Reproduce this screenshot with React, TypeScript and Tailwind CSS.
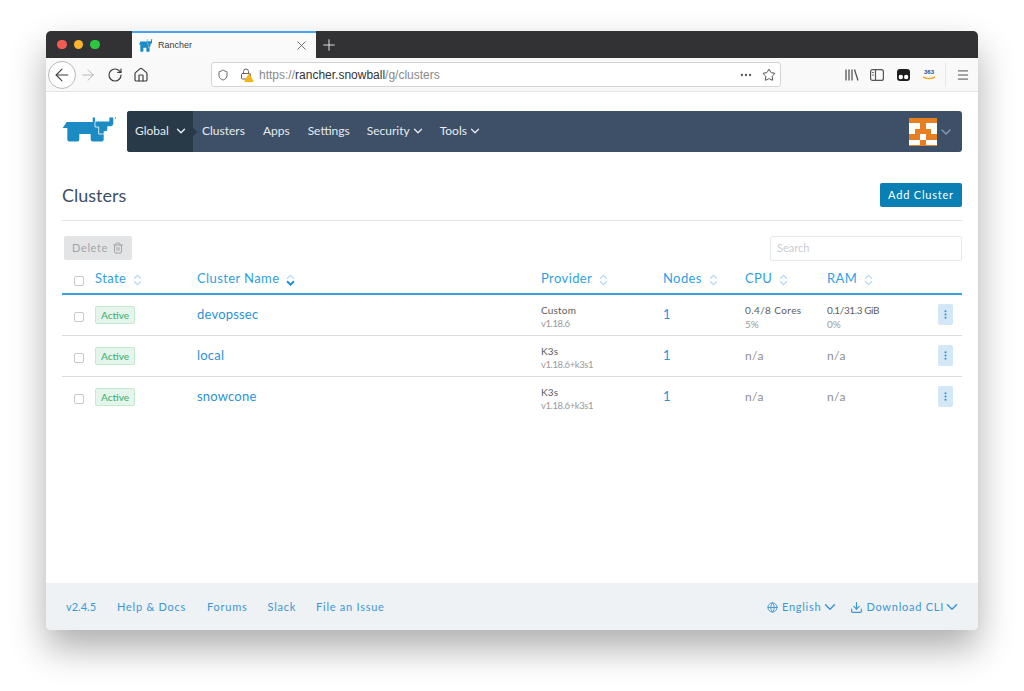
import { ArrowLeft, ArrowRight, ChevronDown, Download, EllipsisVertical, Globe, Home, Menu, MoreHorizontal, RotateCw, Star, Trash2, X, Plus, Shield, Lock } from "lucide-react"

const font = "font-['Lato','Open_Sans',sans-serif]"

function Rhino({ className }: { className?: string }) {
  return (
    <svg viewBox="0 0 55 25" preserveAspectRatio="none" className={className}>
      <path
        fill="#1a8cc3"
        d="M0.7 11 L4.7 5 H30.7 V0.5 H33 V4.5 H47.3 V0.5 H51.3 V6 Q51.3 9.3 48 9.3 H45.3 V12.5 Q45.3 14.3 43.5 14.3 H41.7 V22.5 Q41.7 24.5 39.7 24.5 H31 Q28.7 24.5 28.7 22.5 V17 H17.3 V22.5 Q17.3 24.5 15.3 24.5 H7.3 Q5.3 24.5 5.3 22.5 V11 Z"
      />
      <path fill="none" stroke="#fff" strokeWidth="0.8" d="M33 4.5 V10 H36.7 V17 H41.7" />
      <circle cx="53.5" cy="1" r="0.7" fill="#1a8cc3" />
    </svg>
  )
}

function Sort({ active }: { active?: boolean }) {
  return (
    <svg viewBox="0 0 10 14" className="ml-[7px] mt-[1px] h-[12px] w-[9px]" fill="none" stroke="#b5daf3" strokeWidth="1.4">
      <path d="M1 5.5 L5 1.5 L9 5.5" />
      <path d="M1 8.5 L5 12.5 L9 8.5" stroke={active ? "#1b8fd6" : "#b5daf3"} strokeWidth={active ? 2.2 : 1.4} />
    </svg>
  )
}

function Checkbox() {
  return <span className="block h-[10px] w-[10px] rounded-[2px] border border-[#c9c9c9] bg-white" />
}

const rows = [
  { name: "devopssec", provider: "Custom", version: "v1.18.6", cpu: "0.4/8 Cores", cpuPct: "5%", ram: "0.1/31.3 GiB", ramPct: "0%" },
  { name: "local", provider: "K3s", version: "v1.18.6+k3s1" },
  { name: "snowcone", provider: "K3s", version: "v1.18.6+k3s1" },
]

const grid = "grid grid-cols-[33px_102px_344px_122px_82px_82px_111px_24px]"

export default function App() {
  return (
    <div className={`h-[691px] w-[1024px] overflow-hidden bg-white pl-[46px] pt-[31px] ${font}`}>
      <div className="flex h-[599px] w-[932px] flex-col overflow-hidden rounded-[5px] bg-white shadow-[0_18px_36px_rgba(0,0,0,0.32)]">
        {/* Tab strip */}
        <div className="flex h-[27px] items-stretch bg-[#323234]">
          <div className="flex w-[86px] items-center gap-[7px] pl-[11px]">
            <span className="h-[9.5px] w-[9.5px] rounded-full bg-[#f25c54]" />
            <span className="h-[9.5px] w-[9.5px] rounded-full bg-[#f9b52c]" />
            <span className="h-[9.5px] w-[9.5px] rounded-full bg-[#2bc840]" />
          </div>
          <div className="flex w-[184px] items-center border-t-2 border-[#4aa3ea] bg-[#fafafa] pl-[7px] pr-[7px]">
            <Rhino className="h-[13px] w-[14px]" />
            <span className="ml-[5px] flex-1 font-['Liberation_Sans',sans-serif] text-[9px] text-[#3b3b3b]">Rancher</span>
            <X className="h-[15px] w-[15px] text-[#555]" strokeWidth={1.3} />
          </div>
          <div className="flex w-[26px] items-center justify-center">
            <Plus className="h-[18px] w-[18px] text-[#e5e5e5]" strokeWidth={1.3} />
          </div>
        </div>

        {/* Toolbar */}
        <div className="flex h-[34px] items-center border-b border-[#e4e4e4] bg-[#f9f9fa]">
          <span className="ml-[2px] flex h-[28px] w-[28px] items-center justify-center rounded-full border border-[#b9b9b9] bg-white">
            <ArrowLeft className="h-[20px] w-[20px] text-[#3f3f3f]" strokeWidth={1.3} />
          </span>
          <ArrowRight className="ml-[3px] h-[18px] w-[18px] text-[#b5b5b5]" strokeWidth={1.3} />
          <RotateCw className="ml-[10px] h-[16px] w-[16px] text-[#3f3f3f]" strokeWidth={1.8} />
          <Home className="ml-[10px] h-[16px] w-[16px] text-[#3f3f3f]" strokeWidth={1.8} />
          <div className="ml-[62px] flex h-[25px] w-[570px] items-center rounded-[3px] border border-[#d4d4d4] bg-white pl-[5px] pr-[4px]">
            <Shield className="h-[12px] w-[12px] text-[#555]" strokeWidth={1.8} />
            <span className="relative ml-[11px] h-[14px] w-[14px]">
              <Lock className="h-[12px] w-[12px] text-[#555]" strokeWidth={1.8} />
              <svg viewBox="0 0 10 9" className="absolute bottom-0 right-0 h-[9px] w-[10px]">
                <path d="M5 0 L10 9 H0 Z" fill="#f5b31c" />
              </svg>
            </span>
            <span className="ml-[5px] flex-1 font-['Liberation_Sans',sans-serif] text-[12px] text-[#8a8a8a]">
              https://<span className="text-[#333]">rancher.snowball</span>/g/clusters
            </span>
            <MoreHorizontal className="h-[14px] w-[14px] text-[#555]" />
            <Star className="ml-[9px] h-[14px] w-[14px] text-[#444]" strokeWidth={1.6} />
          </div>
          {/* Library, sidebar, extensions */}
          <svg viewBox="0 0 14 12" className="ml-[64px] h-[12px] w-[14px]" fill="none" stroke="#555" strokeWidth="1.3">
            <path d="M1 0.5 V11.5 M4 0.5 V11.5 M7 0.5 V11.5 M9.5 0.5 L13 11.5" />
          </svg>
          <svg viewBox="0 0 14 12" className="ml-[11px] h-[12px] w-[14px]" fill="none" stroke="#555" strokeWidth="1.2">
            <rect x="0.6" y="0.6" width="12.8" height="10.8" rx="2" />
            <path d="M5.5 0.6 V11.4 M2.2 3.5 H3.8 M2.2 6 H3.8" />
          </svg>
          <svg viewBox="0 0 13 12" className="ml-[13px] h-[12px] w-[13px]">
            <rect width="13" height="12" rx="3" fill="#1c1c1e" />
            <circle cx="3.8" cy="8" r="2.2" fill="#fff" />
            <circle cx="9.2" cy="8" r="2.2" fill="#fff" />
          </svg>
          <div className="ml-[12px] flex w-[14px] flex-col items-center">
            <span className="font-['Liberation_Sans',sans-serif] text-[6px] font-bold leading-[7px] text-[#2a4b8d]">363</span>
            <svg viewBox="0 0 14 4" className="h-[4px] w-[14px]" fill="none" stroke="#f5a623" strokeWidth="1.4">
              <path d="M1 0.8 Q7 4.5 13 0.8" />
            </svg>
          </div>
          <span className="ml-[9px] h-[24px] w-px bg-[#e6e6e6]" />
          <Menu className="ml-[10px] h-[14px] w-[14px] text-[#444]" strokeWidth={1.6} />
        </div>

        {/* Page */}
        <div className="flex flex-1 flex-col bg-white">
          <div className="flex-1 px-4 pt-[19px]">
            <div className="flex h-[41px] items-stretch">
              <div className="flex w-[65px] items-center pb-[4px]">
                <Rhino className="h-[25px] w-[55px]" />
              </div>
              <nav className="flex flex-1 items-center rounded-[3px] bg-[#3d5068] text-[12px] text-[#e6ebef]">
                <div className="relative flex h-full w-[66px] items-center rounded-l-[3px] bg-[#283947] pb-[2px] pl-[8px]">
                  Global
                  <ChevronDown className="ml-[5px] h-[14px] w-[14px]" strokeWidth={2.5} />
                  <span className="absolute -right-[3px] top-1/2 h-[6px] w-[6px] -translate-y-1/2 rotate-45 bg-[#283947]" />
                </div>
                <span className="ml-[9px] pb-[2px]">Clusters</span>
                <span className="ml-[18px] pb-[2px]">Apps</span>
                <span className="ml-[18px] pb-[2px]">Settings</span>
                <span className="ml-[17px] flex items-center pb-[2px]">Security<ChevronDown className="ml-[1px] h-[14px] w-[14px]" strokeWidth={2.2} /></span>
                <span className="ml-[15px] flex items-center pb-[2px]">Tools<ChevronDown className="ml-[1px] h-[14px] w-[14px]" strokeWidth={2.2} /></span>
                <div className="ml-auto mr-[8px] flex items-center">
                  <div className="grid h-[28px] w-[28px] grid-cols-5 grid-rows-5 bg-[#e67e22]">
                    {[0,0,0,0,0, 1,1,0,1,1, 1,0,0,0,1, 0,0,1,0,0, 1,1,0,1,1].map((w, i) => (
                      <span key={i} className={w ? "bg-white" : ""} />
                    ))}
                  </div>
                  <ChevronDown className="ml-px h-[16px] w-[16px] text-[#8d9bab]" strokeWidth={2} />
                </div>
              </nav>
            </div>

            <div className="flex h-[69px] items-center justify-between border-b border-[#e6e6e6] pt-[24px] pb-[6px]">
              <h1 className="text-[18px] text-[#3d5068]">Clusters</h1>
              <button className="h-[24px] w-[82px] rounded-[2px] bg-[#0a7fb3] pt-px text-[11px] tracking-[0.8px] text-white">Add Cluster</button>
            </div>

            <div className="mt-[15px] flex items-start justify-between">
              <button className="ml-[2px] flex h-[24px] w-[68px] items-center justify-center gap-[4px] rounded-[2px] bg-[#e3e4e6] text-[11px] tracking-[0.6px] text-[#a3a5a8]">
                Delete <Trash2 className="h-[12px] w-[12px]" />
              </button>
              <div className="flex h-[25px] w-[192px] items-center rounded-[2px] border border-[#e6e9eb] pl-[6px] text-[11px] text-[#c9cdd1]">Search</div>
            </div>

            <div className={`${grid} mt-[7px] h-[27px] items-center border-b-2 border-[#3a9fdf] pb-[3px] text-[13px] tracking-[0.4px] text-[#2f9fe3]`}>
              <span className="pl-[12px] pt-[3px]"><Checkbox /></span>
              <span className="flex items-center">State<Sort /></span>
              <span className="flex items-center">Cluster Name<Sort active /></span>
              <span className="flex items-center">Provider<Sort /></span>
              <span className="flex items-center">Nodes<Sort /></span>
              <span className="flex items-center">CPU<Sort /></span>
              <span className="flex items-center">RAM<Sort /></span>
              <span />
            </div>

            {rows.map((r, i) => (
              <div key={r.name} className={`${grid} h-[41px] items-center border-b ${i < 2 ? "border-[#dcdcdc]" : "border-transparent"}`}>
                <span className="pl-[12px] pt-[3px]"><Checkbox /></span>
                <span className="flex">
                  <span className="h-[18px] w-[40px] rounded-[2px] border border-[#c4e8d2] bg-[#e5f5eb] text-center text-[10px] leading-[16px] font-medium text-[#3bb371]">Active</span>
                </span>
                <span className="text-[13px] tracking-[0.2px] text-[#2a93d8]">{r.name}</span>
                <span className="pt-[4px] text-[10px] leading-[14px]">
                  <span className="block tracking-[0.2px] text-[#5c5c5c]">{r.provider}</span>
                  <span className="block text-[9.5px] tracking-[-0.4px] text-[#9a9a9a]">{r.version}</span>
                </span>
                <span className="text-[13px] text-[#2a93d8]">1</span>
                {r.cpu ? (
                  <span className="pt-[4px] text-[10px] leading-[14px]">
                    <span className="block tracking-[0.4px] text-[#5c5c5c]">{r.cpu}</span>
                    <span className="block text-[#9a9a9a]">{r.cpuPct}</span>
                  </span>
                ) : (
                  <span className="text-[12px] tracking-[0.4px] text-[#8f8f8f]">n/a</span>
                )}
                {r.ram ? (
                  <span className="pt-[4px] text-[10px] leading-[14px]">
                    <span className="block tracking-[-0.4px] text-[#5c5c5c]">{r.ram}</span>
                    <span className="block text-[#9a9a9a]">{r.ramPct}</span>
                  </span>
                ) : (
                  <span className="text-[12px] tracking-[0.4px] text-[#8f8f8f]">n/a</span>
                )}
                <span className="flex h-[21px] w-[15px] -translate-y-px items-center justify-center rounded-[2px] bg-[#d3e7f7] text-[#2a93d8]">
                  <EllipsisVertical className="h-[11px] w-[11px]" strokeWidth={2.5} />
                </span>
              </div>
            ))}
          </div>

          {/* Footer */}
          <div className="flex h-[47px] items-center bg-[#eef2f4] pl-[20px] pr-[17px] pt-px text-[11px] tracking-[0.75px] text-[#3b97d6]">
            <span className="tracking-normal">v2.4.5</span>
            <span className="ml-[21px]">Help &amp; Docs</span>
            <span className="ml-[21px]">Forums</span>
            <span className="ml-[20px]">Slack</span>
            <span className="ml-[20px]">File an Issue</span>
            <span className="ml-auto flex items-center">
              <Globe className="mr-[4px] h-[11px] w-[11px]" />English<ChevronDown className="h-[18px] w-[18px]" strokeWidth={2} />
            </span>
            <span className="ml-[11px] flex items-center">
              <Download className="mr-[3px] h-[13px] w-[13px]" strokeWidth={2.2} />Download CLI<ChevronDown className="-ml-[1px] h-[18px] w-[18px]" strokeWidth={2} />
            </span>
          </div>
        </div>
      </div>
    </div>
  )
}
